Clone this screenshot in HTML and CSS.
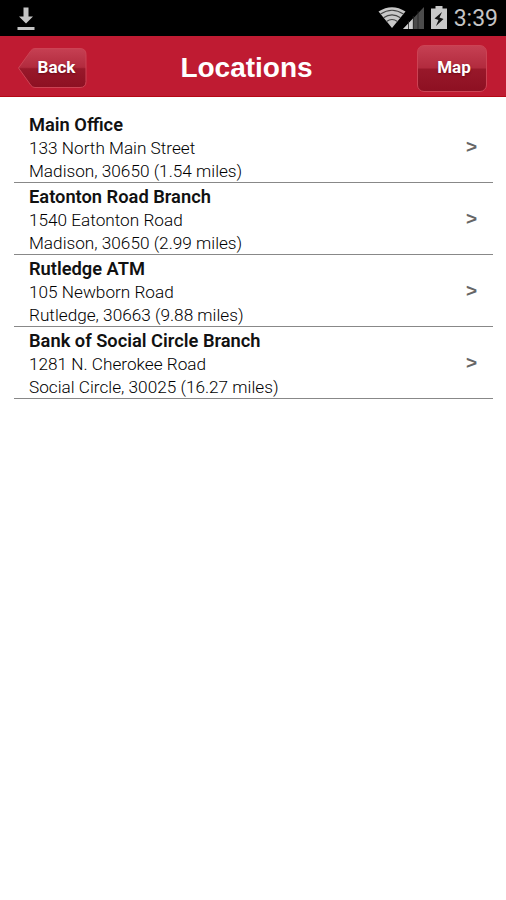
FILE: index.html
```html
<!DOCTYPE html>
<html lang="en">
<head>
  <meta charset="UTF-8" />
  <meta name="viewport" content="width=device-width, initial-scale=1.0"/>
  <title>Locations</title>
  <link rel="stylesheet" href="styles.css">
</head>
<body>
  <div class="status-bar">
    <svg class="icon-download" width="18" height="24" viewBox="0 0 18 24">
      <path d="M6.500 0.500h5v9h4.500L9 16.500 2 9.500h4.500z M0.500 20h17v3h-17z" fill="#c4c4c4"/>
    </svg>
    <div class="status-right">
      <svg width="28" height="21" viewBox="0 0 28 21">
        <path d="M0.500 4.500Q14-4 27.500 4.500L14 21z" fill="#c8c8c8"/>
        <path d="M2.500 7Q14-0.500 25.500 7M5.500 10.800Q14 5 22.500 10.800M8.500 14.500Q14 10.500 19.500 14.500" fill="none" stroke="#444" stroke-width="1.100"/>
      </svg>
      <svg class="icon-signal" width="21" height="22" viewBox="0 0 21 22">
        <path d="M21 0v22H0z" fill="#4c4c4c"/>
        <path d="M10 11.500V22H0z" fill="#d0d0d0"/>
        <path d="M5.500 14v8M10.300 9v13M15 4v18" stroke="#222" stroke-width="0.800"/>
      </svg>
      <svg class="icon-battery" width="16" height="23" viewBox="0 0 16 23">
        <path d="M4.500 0h7v2.500H16V23H0V2.500h4.500z" fill="#c8c8c8"/>
        <path d="M11 6L3.500 12.500l4 1.500-2.500 6 7.500-7-4-1.500z" fill="#111"/>
      </svg>
      <span class="clock">3:39</span>
    </div>
  </div>

  <div class="header">
    <button class="btn-back">
      <svg class="btn-shape" width="70" height="42" viewBox="0 0 70 42">
        <defs>
          <linearGradient id="gloss" x1="0" y1="0" x2="0" y2="1">
            <stop offset="0" stop-color="#c64053"/>
            <stop offset="0.480" stop-color="#b22b3e"/>
            <stop offset="0.520" stop-color="#98182a"/>
            <stop offset="1" stop-color="#8d1022"/>
          </linearGradient>
        </defs>
        <path d="M1.500 21L14 3.500Q15.500 1.500 18 1.500H63Q69 1.500 69 7.500V34.500Q69 40.500 63 40.500H18Q15.500 40.500 14 38.500z" fill="url(#gloss)" stroke="#cc4354" stroke-width="1"/>
      </svg>
      <span>Back</span>
    </button>
    <h1>Locations</h1>
    <button class="btn-map">Map</button>
  </div>

  <div class="locations">
    <div class="location">
      <div>
        <h2>Main Office</h2>
        <p>133 North Main Street</p>
        <p>Madison, 30650 (1.54 miles)</p>
      </div>
      <span class="arrow">&gt;</span>
    </div>
    <div class="location">
      <div>
        <h2>Eatonton Road Branch</h2>
        <p>1540 Eatonton Road</p>
        <p>Madison, 30650 (2.99 miles)</p>
      </div>
      <span class="arrow">&gt;</span>
    </div>
    <div class="location">
      <div>
        <h2>Rutledge ATM</h2>
        <p>105 Newborn Road</p>
        <p>Rutledge, 30663 (9.88 miles)</p>
      </div>
      <span class="arrow">&gt;</span>
    </div>
    <div class="location">
      <div>
        <h2>Bank of Social Circle Branch</h2>
        <p>1281 N. Cherokee Road</p>
        <p>Social Circle, 30025 (16.27 miles)</p>
      </div>
      <span class="arrow">&gt;</span>
    </div>
  </div>
</body>
</html>
```
FILE: styles.css
```css
* {
  box-sizing: border-box;
}

body {
  font-family: Roboto, sans-serif;
  background: #fff;
  margin: 0;
  min-height: 900px;
}

h1, h2, p {
  margin: 0;
}

.status-bar {
  height: 36px;
  background: #000;
  display: flex;
  justify-content: space-between;
  padding: 7px 8px 0 17px;
}

.status-right {
  display: flex;
  align-items: flex-start;
}

.icon-signal {
  margin-left: -3px;
}

.icon-battery {
  margin: -1px 7px 0 7px;
}

.clock {
  color: #c4c4c4;
  font-size: 23px;
  line-height: 24px;
}

.header {
  height: 61px;
  background: #bf1b32;
  border-bottom: 1px solid #b50815;
  display: grid;
  grid-template-columns: 70px 1fr 70px;
  align-items: center;
  padding: 0 19px 0 17px;
}

.header h1 {
  font-family: "Liberation Sans", Arial, sans-serif;
  font-size: 28px;
  line-height: 32px;
  font-weight: bold;
  color: #fff;
  text-align: center;
  padding: 3px 11px 0 0;
}

button {
  border: none;
  background: none;
  padding: 0;
  font-family: Roboto, sans-serif;
  font-size: 17px;
  font-weight: bold;
  color: #fff;
  text-shadow: 0 1px 2px rgba(80, 0, 10, 0.6);
}

.btn-back {
  display: grid;
  height: 42px;
  align-items: center;
  margin-top: 4px;
}

.btn-back > * {
  grid-area: 1 / 1;
}

.btn-back span {
  padding: 0 0 2px 9px;
}

.btn-map {
  height: 47px;
  border: 1px solid #cc4354;
  border-radius: 7px;
  background: linear-gradient(#c64053, #b22b3e 48%, #98182a 52%, #8d1022);
  padding: 0 0 2px 4px;
  margin-top: 4px;
}

.locations {
  padding: 14px 13px 0 14px;
}

.location {
  height: 72px;
  border-bottom: 1px solid #888;
  display: flex;
  justify-content: space-between;
  padding: 2px 16px 0 15px;
}

.location h2 {
  font-size: 18.3px;
  line-height: 24px;
  font-weight: 600;
  color: #111;
}

.location p {
  font-size: 17.2px;
  line-height: 23px;
  font-weight: 300;
  color: #000;
}

.arrow {
  font-family: "Liberation Sans", Arial, sans-serif;
  font-size: 19px;
  line-height: 68px;
  font-weight: bold;
  color: #666;
}
```
